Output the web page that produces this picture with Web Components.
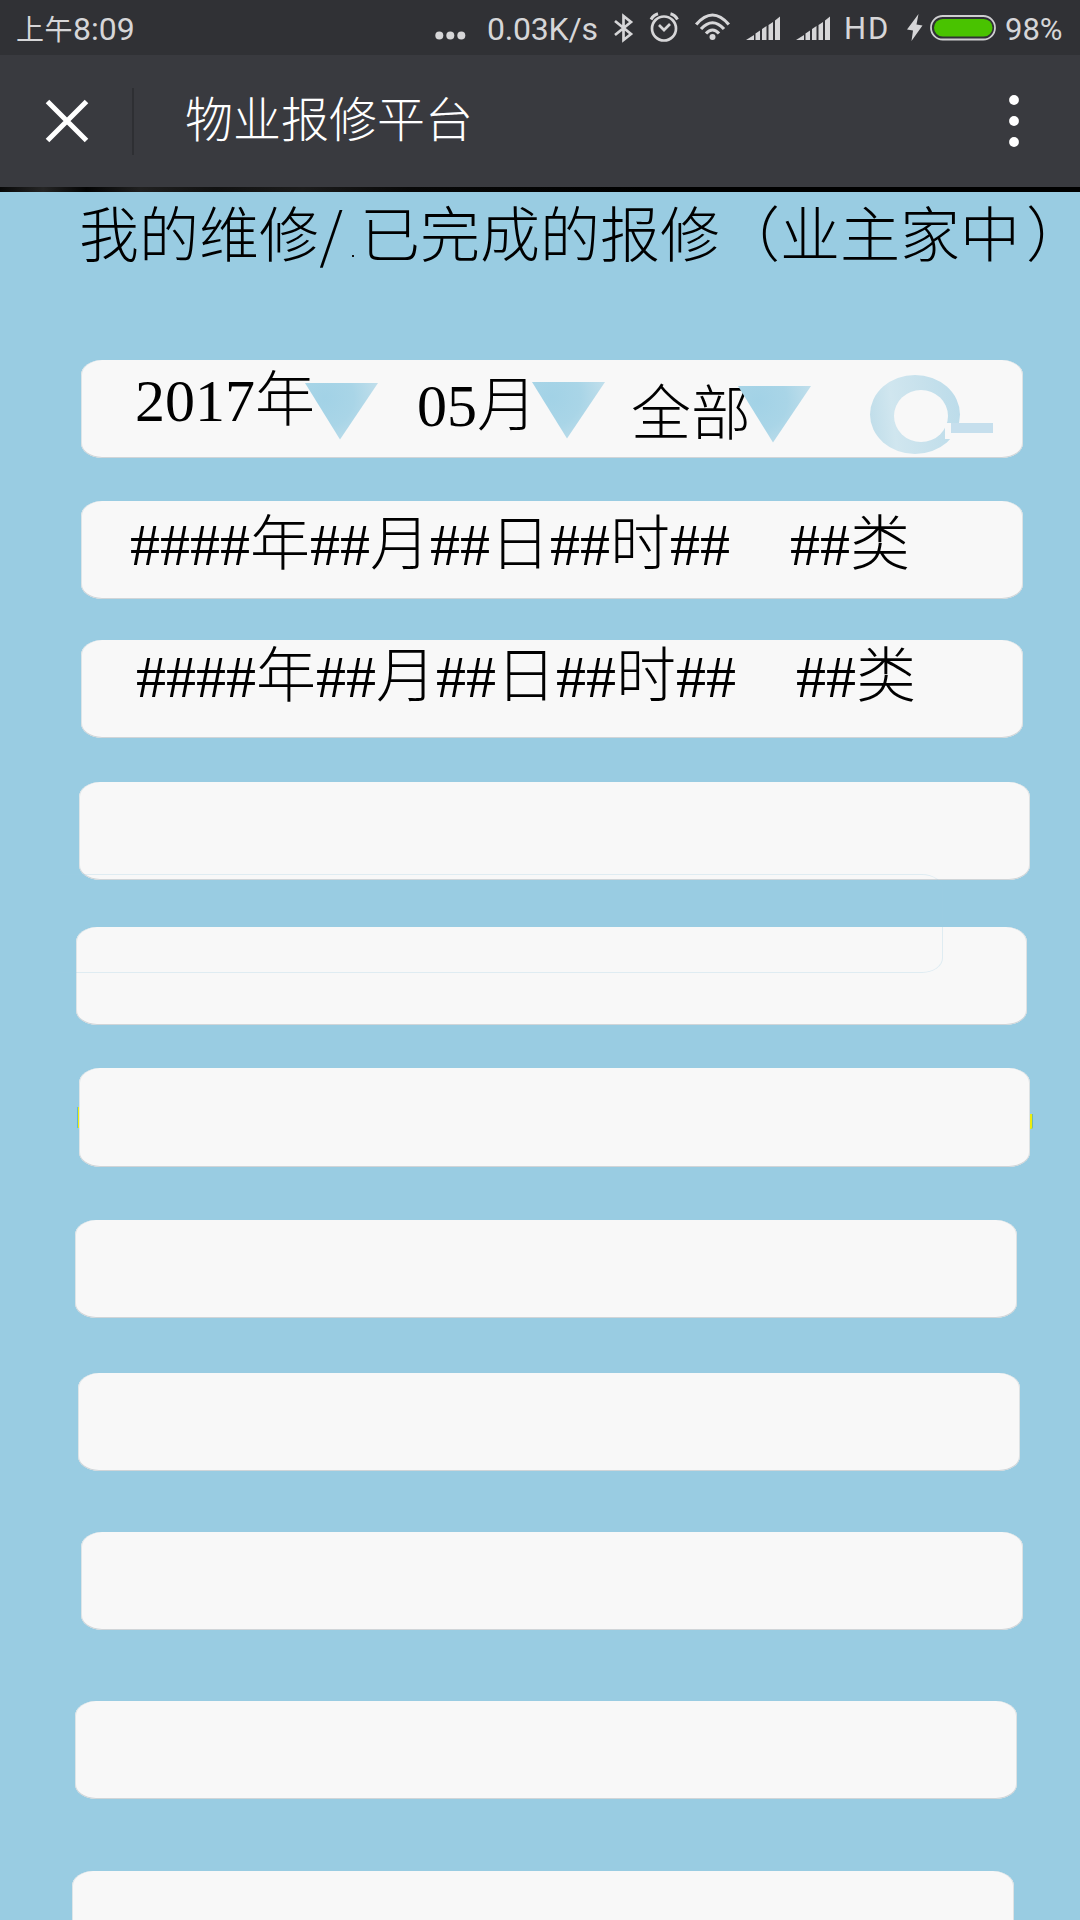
<!DOCTYPE html>
<html lang="zh-CN">
<head>
<meta charset="utf-8">
<title>物业报修平台</title>
<style>
html,body{margin:0;padding:0;background:#99cce2}
body{width:1080px;height:1920px;overflow:hidden}
</style>
</head>
<body>
<repair-app></repair-app>
<script>
const define=(name,html,setup)=>customElements.define(name,class extends HTMLElement{
  constructor(){
    super();
    this.attachShadow({mode:'open'});
    const t=document.createElement('template');
    t.innerHTML=html;
    this.shadowRoot.append(t.content.cloneNode(true));
  }
  connectedCallback(){ if(setup) setup(this,this.shadowRoot); }
});

const signal='<path d="M0 24L8 19V24ZM9.500 17.500L14 14.500V24H9.500ZM16 13L20.500 10V24H16ZM22.500 9L27 6V24H22.500ZM29 4.500L34 .5V24H29Z"/>';
const icons={
  more:[31,28,'<circle cx="4.300" cy="21.500" r="4"/><circle cx="15.300" cy="21.500" r="4"/><circle cx="26.300" cy="21.500" r="4"/>'],
  bluetooth:[20,28,'<path d="M1 7L17 20L9.500 26V2L17 8L1 21" fill="none" stroke="#d6d6d8" stroke-width="2.700"/>'],
  alarm:[29,28,'<g fill="none" stroke="#d6d6d8" stroke-width="2.700"><circle cx="14" cy="15.500" r="12"/><path d="M9 12L14 17L20 11"/><path d="M1 6.500Q3.500 2 8 .8M27.500 6.500Q25 2 20.500 .8" stroke-width="3"/></g>'],
  wifi:[36,28,'<g fill="none" stroke="#d6d6d8" stroke-width="3.200"><path d="M1.200 11.500Q17.500 -7.500 33.800 11.500"/><path d="M6 16Q17.500 3.500 29 16"/><path d="M11 20.500Q17.500 13.500 24 20.500"/></g><circle cx="17.500" cy="24" r="3"/>'],
  signal:[34,24,signal],
  bolt:[16,28,'<path d="M11.500 0L0 15.500L6 16.500L4.500 27L15.500 11.500L9.500 10.500Z"/>'],
  battery:[66,26,'<rect x="1" y="1" width="64" height="23.500" rx="11.750" fill="none" stroke="#cfcfd1" stroke-width="1.800"/><rect x="4" y="4" width="58.500" height="17.500" rx="8.750" fill="#49c300"/>'],
  close:[44,44,'<path d="M2.500 2.500L41.500 41.500M41.500 2.500L2.500 41.500" stroke="#fff" stroke-width="5" fill="none"/>'],
  menu:[10,54,'<g fill="#fff"><circle cx="5" cy="5" r="4.900"/><circle cx="5" cy="26" r="4.900"/><circle cx="5" cy="47" r="4.900"/></g>'],
  triangle:[73,57,'<defs><radialGradient id="g" cx="20" cy="15" r="58" gradientUnits="userSpaceOnUse"><stop offset="0" stop-color="#a2d2e6"/><stop offset=".5" stop-color="#a9d5e7"/><stop offset="1" stop-color="#c4e0ec"/></radialGradient></defs><path d="M0 0H73L35 56.500Z" fill="url(#g)"/>'],
  search:[124,80,'<defs><linearGradient id="r" x1="0" y1=".5" x2="1" y2=".4"><stop offset="0" stop-color="#c1deea"/><stop offset=".25" stop-color="#d0e6ef"/><stop offset=".6" stop-color="#c7e1ec"/><stop offset="1" stop-color="#bcdcea"/></linearGradient></defs><ellipse cx="45" cy="39.500" rx="45" ry="39.500" fill="url(#r)"/><ellipse cx="51" cy="41" rx="27" ry="26" fill="#f8f8f8"/><path d="M75 48H88V64H75Z" fill="#f8f8f8"/><path d="M81 48H123V58H81Z" fill="#c6dfed"/>']
};
define('ui-icon','<style>:host{display:block;flex:none;line-height:0}svg{display:block;fill:#d6d6d8;overflow:visible}</style><svg xmlns="http://www.w3.org/2000/svg"></svg>',(el,root)=>{
  const [w,h,body]=icons[el.getAttribute('name')];
  const s=root.querySelector('svg');
  s.setAttribute('width',w);s.setAttribute('height',h);s.setAttribute('viewBox',`0 0 ${w} ${h}`);
  s.innerHTML=body;
});

define('status-bar',`<style>
:host{display:flex;height:57px;margin-bottom:-2px;background:linear-gradient(#303135 55px,#393a3f 55px);color:#d6d6d8;font:32px/55px Roboto,"Noto Sans CJK SC",sans-serif;box-sizing:border-box;padding-left:16px;align-items:flex-start;white-space:nowrap}
.time{width:419px;flex:none;padding-top:2px}.cn{font-size:28px;letter-spacing:.5px}
.speed{margin-left:21px;width:112px;flex:none;padding-top:2px;letter-spacing:-.2px}
.hd{font-size:31px;letter-spacing:2px;margin-left:14px;width:48px;padding-top:1px}
.pct{font-size:31px;margin-left:9px;padding-top:2px}
ui-icon{margin-top:14px}
</style>
<span class="time"><span class="cn">上午</span>8:09</span>
<ui-icon name="more"></ui-icon><span class="speed">0.03K/s</span>
<ui-icon name="bluetooth" style="margin-left:15px"></ui-icon>
<ui-icon name="alarm" style="margin-left:16px;margin-top:13px"></ui-icon>
<ui-icon name="wifi" style="margin-left:16px;margin-top:13px"></ui-icon>
<ui-icon name="signal" style="margin-left:15px;margin-top:16px"></ui-icon>
<ui-icon name="signal" style="margin-left:16px;margin-top:16px"></ui-icon>
<span class="hd">HD</span>
<ui-icon name="bolt" style="margin-left:15px"></ui-icon>
<ui-icon name="battery" style="margin-left:7px;margin-top:15px"></ui-icon>
<span class="pct">98%</span>`);

define('nav-bar',`<style>
:host{display:flex;height:132px;background:#393a3f;color:#fff;align-items:flex-start;box-sizing:border-box;padding-left:45px}
i{width:2px;height:67px;background:#2e2f33;margin:33px 0 0 43px}
.title{font:300 48px/60px "Noto Sans CJK SC",sans-serif;margin:31px 0 0 51px;width:824px;flex:none}
</style>
<ui-icon name="close" style="margin-top:44px"></ui-icon><i></i>
<span class="title"><slot></slot></span>
<ui-icon name="menu" style="margin-top:40px"></ui-icon>`);

define('page-heading',`<style>
:host{display:block;height:168px;box-sizing:border-box;padding:15px 0 0 79px;font:300 60px/60px "Liberation Serif","Noto Sans CJK SC",serif;color:#000;white-space:nowrap}
.slash{display:inline-block;width:30px;text-align:center;font-family:"Noto Sans CJK SC",sans-serif;line-height:0;margin:0 3px 0 -3px}
.dot{display:inline-block;width:2px;height:2px;background:#111;margin:0 6px 0 3px}
.close{margin-left:6px;font-feature-settings:"halt"}
</style>
我的维修<span class="slash">/</span><span class="dot"></span>已完成的报修（业主家中<span class="close">）</span>`);

define('list-card',`<style>
:host{display:block;flex:none;position:relative;box-sizing:border-box;background:#f8f8f8;border-radius:21px/15px;box-shadow:inset 0 -1px 0 #d0d5d8,inset 1px 0 0 #dde5e8,inset -1px 0 0 #dde2e4;font:300 60px/60px "Liberation Serif","Noto Sans CJK SC",serif;color:#000;white-space:nowrap}
</style><slot></slot>`,el=>{
  const [x,gap,w,h]=el.getAttribute('box').split(' ');
  Object.assign(el.style,{marginLeft:x+'px',marginTop:gap+'px',width:w+'px',height:h+'px'});
});

define('filter-select',`<style>
:host{display:flex;align-items:flex-start}
ui-icon{margin-left:var(--overlap,-7px);margin-top:var(--arrow-top,0)}
</style><span><slot></slot></span><ui-icon name="triangle"></ui-icon>`);

define('repair-app',`<style>
:host{display:block;width:1080px;height:1920px;overflow:hidden;background:#99cce2;position:relative}
.strip{height:5px;background:linear-gradient(90deg,#080808 0,#252525 4%,#030303 8%,#202020 13%,#111 20%,#1b1b1b 28%,#080808 38%,#000 60%)}
main{display:flex;flex-direction:column}
.filters{display:flex;align-items:flex-start}
.line{display:block}
.ghost{position:absolute;left:60px;top:874px;width:883px;height:99px;border:1px solid rgba(158,205,225,.28);border-left:0;border-radius:0 21px 21px 0/0 15px 15px 0;box-sizing:border-box}
.mark{position:absolute;background:#efed0b;border:solid #74bba0}
.left{left:-2px;top:39px;width:1px;height:21px;border-width:0 0 0 1px;border-color:#61b5dc}
.right{right:-3px;top:46px;width:2px;height:15px;border-width:0 1px 0 0;border-bottom-right-radius:2px}
</style>
<status-bar></status-bar>
<nav-bar>物业报修平台</nav-bar>
<div class="strip"></div>
<page-heading></page-heading>
<main>
<list-card box="81 0 942 98"><div class="filters">
<filter-select style="margin:11px 0 0 54px;--overlap:-10px;--arrow-top:12px">2017年</filter-select>
<filter-select style="margin:16px 0 0 39px;--overlap:-5px;--arrow-top:6px">05月</filter-select>
<filter-select style="margin:25px 0 0 26px;--overlap:-13px;--arrow-top:1px">全部</filter-select>
<ui-icon name="search" style="margin:15px 0 0 59px"></ui-icon>
</div></list-card>
<list-card box="81 43 942 98"><span class="line" style="margin:14px 0 0 49px">####年##月##日##时##　##类</span></list-card>
<list-card box="81 41 942 98"><span class="line" style="margin:7px 0 0 55px">####年##月##日##时##　##类</span></list-card>
<list-card box="79 44 951 98"></list-card>
<list-card box="76 47 951 98"></list-card>
<list-card box="79 43 951 99"><span class="mark left"></span><span class="mark right"></span></list-card>
<list-card box="75 53 942 98"></list-card>
<list-card box="78 55 942 98"></list-card>
<list-card box="81 61 942 98"></list-card>
<list-card box="75 71 942 98"></list-card>
<list-card box="72 72 942 98"></list-card>
</main>
<div class="ghost"></div>`);
</script>
</body>
</html>
